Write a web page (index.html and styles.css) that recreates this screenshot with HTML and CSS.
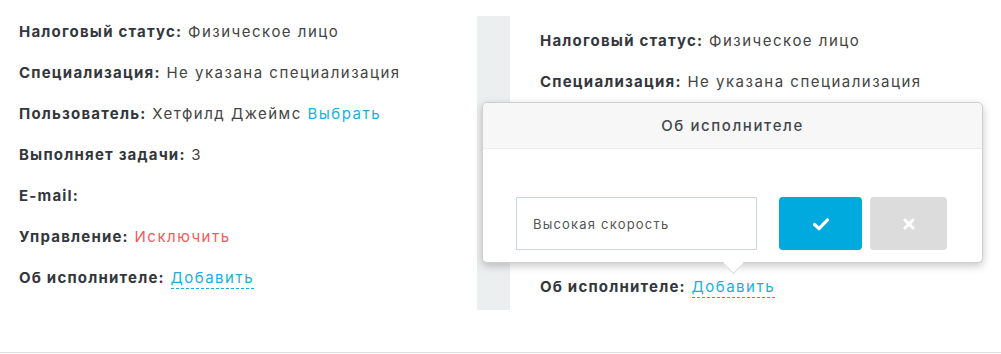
FILE: index.html
```
<!DOCTYPE html>
<html>
<head>
  <meta charset="UTF-8" />
  <title>Исполнитель</title>
  <link rel="stylesheet" href="styles.css">
</head>
<body>

<div class="page">

  <!-- Left card -->
  <div class="panel panel-left">
    <div class="row"><b>Налоговый статус:</b> Физическое лицо</div>
    <div class="row"><b>Специализация:</b> Не указана специализация</div>
    <div class="row"><b>Пользователь:</b> Хетфилд Джеймс <a class="link">Выбрать</a></div>
    <div class="row"><b>Выполняет задачи:</b> 3</div>
    <div class="row"><b>E-mail:</b></div>
    <div class="row"><b>Управление:</b> <a class="danger">Исключить</a></div>
    <div class="row"><b>Об исполнителе:</b> <a class="link dashed">Добавить</a></div>
  </div>

  <!-- Right card with open editor -->
  <div class="panel panel-right">
    <div class="row"><b>Налоговый статус:</b> Физическое лицо</div>
    <div class="row"><b>Специализация:</b> Не указана специализация</div>
    <!-- rows under the popover -->
    <div class="row covered"><b>Пользователь:</b> Хетфилд Джеймс <a class="link">Выбрать</a></div>
    <div class="row covered"><b>Выполняет задачи:</b> 3</div>
    <div class="row covered"><b>E-mail:</b></div>
    <div class="row covered"><b>Управление:</b> <a class="danger">Исключить</a></div>
    <div class="row"><b>Об исполнителе:</b> <a class="link dashed">Добавить</a></div>

    <div class="popover">
      <div class="popover-title">Об исполнителе</div>
      <div class="popover-body">
        <input type="text" class="field" value="Высокая скорость" />
        <button class="btn btn-ok">
          <svg width="18" height="14" viewBox="0 0 18 14"><path d="M2.5 7.5l4.5 4.2L15.5 2.8" fill="none" stroke="#fff" stroke-width="3.2" stroke-linecap="round" stroke-linejoin="round"/></svg>
        </button>
        <button class="btn btn-cancel">
          <svg width="12" height="12" viewBox="0 0 12 12"><path d="M2 2l8 8M10 2l-8 8" fill="none" stroke="#fff" stroke-width="3" stroke-linecap="round"/></svg>
        </button>
      </div>
      <span class="arrow"></span>
    </div>
  </div>

</div>

</body>
</html>
```

FILE: styles.css
```
body { margin: 0; font-family: Inter, Roboto, "Liberation Sans", sans-serif; font-size: 15px; color: #444; background: #fff; }

.page {
  display: flex;
  height: 352px;
  border-bottom: 1px solid #dedede;
}

.panel { box-sizing: border-box; }
.panel-left { width: 477px; padding: 22px 0 0 19px; }
.panel-right {
  position: relative;
  width: 509px;
  height: 294px;
  margin-top: 16px;
  padding: 15px 0 0 30px;
  border-left: 33px solid #eceff0;
}

.row { line-height: 20px; height: 20px; margin-bottom: 21px; white-space: nowrap; letter-spacing: 1.5px; }
.row b { color: #33373d; font-weight: 700; letter-spacing: 1.2px; }
.covered { visibility: hidden; }

.link { color: #1aafe0; text-decoration: none; cursor: pointer; }
.dashed { border-bottom: 1px dashed #1aafe0; padding-bottom: 1px; }
.danger { color: #f45b57; cursor: pointer; }

.popover {
  position: absolute;
  left: -28px;
  top: 86px;
  width: 501px;
  box-sizing: border-box;
  background: #fff;
  border: 1px solid #cfcfcf;
  border-radius: 5px;
  box-shadow: 0 3px 8px rgba(0, 0, 0, 0.22);
}
.popover-title {
  height: 45px;
  line-height: 45px;
  text-align: center;
  background: #f7f7f7;
  border-bottom: 1px solid #ececec;
  border-radius: 5px 5px 0 0;
  color: #43474d;
  font-weight: 500;
  letter-spacing: 1.6px;
}
.popover-body {
  display: flex;
  align-items: center;
  padding: 48px 35px 12px 33px;
}
.field {
  width: 241px;
  height: 53px;
  box-sizing: border-box;
  border: 1px solid #cdd6e2;
  padding: 0 16px;
  font-family: inherit;
  font-size: 13px;
  letter-spacing: 1.2px;
  color: #555;
  outline: none;
}
.btn {
  height: 53px;
  border: none;
  border-radius: 4px;
  display: flex;
  align-items: center;
  justify-content: center;
  cursor: pointer;
}
.btn-ok { width: 83px; margin-left: 22px; background: #00aade; }
.btn-cancel { width: 77px; margin-left: 8px; background: #dcdcdc; }

.arrow {
  position: absolute;
  left: 243px;
  bottom: -9px;
  width: 14px;
  height: 14px;
  background: #fff;
  border-right: 1px solid #d8d8d8;
  border-bottom: 1px solid #d8d8d8;
  transform: rotate(45deg);
}
```
